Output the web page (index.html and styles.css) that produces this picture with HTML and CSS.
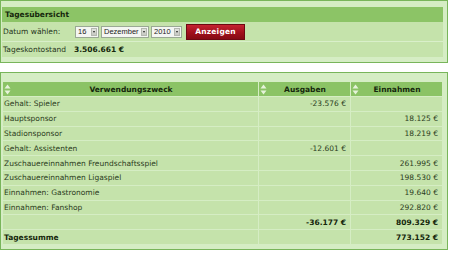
FILE: index.html
```html
<!DOCTYPE html>
<html lang="de">
<head>
<meta charset="utf-8">
<title>Tagesübersicht</title>
<link rel="stylesheet" href="styles.css">
</head>
<body>
<div class="box box-top">
  <div class="panel">
    <div class="phead">Tagesübersicht</div>
    <div class="prow prow-form">
      <span class="lbl">Datum wählen:</span>
      <span class="controls">
        <span class="sel sel-day">16<i class="arr"></i></span>
        <span class="sel sel-month">Dezember<i class="arr"></i></span>
        <span class="sel sel-year">2010<i class="arr"></i></span>
        <button class="btn" type="button">Anzeigen</button>
      </span>
    </div>
    <div class="prow prow-sum">
      <span class="lbl">Tageskontostand</span>
      <b class="val">3.506.661 €</b>
    </div>
  </div>
</div>

<div class="box box-table">
  <table class="tbl">
    <thead>
      <tr>
        <th><div class="th-in"><svg class="sort" viewBox="0 0 7 11" width="7" height="11"><path d="M3.5 0.5 L6.5 4.5 L0.5 4.5 Z M0.5 6.5 L6.5 6.5 L3.5 10.5 Z" fill="#e6f3da"/></svg><span>Verwendungszweck</span><span></span></div></th>
        <th class="num-col"><div class="th-in"><svg class="sort" viewBox="0 0 7 11" width="7" height="11"><path d="M3.5 0.5 L6.5 4.5 L0.5 4.5 Z M0.5 6.5 L6.5 6.5 L3.5 10.5 Z" fill="#e6f3da"/></svg><span>Ausgaben</span><span></span></div></th>
        <th class="num-col"><div class="th-in"><svg class="sort" viewBox="0 0 7 11" width="7" height="11"><path d="M3.5 0.5 L6.5 4.5 L0.5 4.5 Z M0.5 6.5 L6.5 6.5 L3.5 10.5 Z" fill="#e6f3da"/></svg><span>Einnahmen</span><span></span></div></th>
      </tr>
    </thead>
    <tbody>
      <tr><td>Gehalt: Spieler</td><td class="num">-23.576 €</td><td class="num"></td></tr>
      <tr><td>Hauptsponsor</td><td class="num"></td><td class="num">18.125 €</td></tr>
      <tr><td>Stadionsponsor</td><td class="num"></td><td class="num">18.219 €</td></tr>
      <tr><td>Gehalt: Assistenten</td><td class="num">-12.601 €</td><td class="num"></td></tr>
      <tr><td>Zuschauereinnahmen Freundschaftsspiel</td><td class="num"></td><td class="num">261.995 €</td></tr>
      <tr><td>Zuschauereinnahmen Ligaspiel</td><td class="num"></td><td class="num">198.530 €</td></tr>
      <tr><td>Einnahmen: Gastronomie</td><td class="num"></td><td class="num">19.640 €</td></tr>
      <tr><td>Einnahmen: Fanshop</td><td class="num"></td><td class="num">292.820 €</td></tr>
      <tr class="bold"><td></td><td class="num">-36.177 €</td><td class="num">809.329 €</td></tr>
      <tr class="bold"><td>Tagessumme</td><td class="num"></td><td class="num">773.152 €</td></tr>
    </tbody>
  </table>
</div>
</body>
</html>
```

FILE: styles.css
```css
html, body {
  margin: 0;
  padding: 0;
  background: #ffffff;
}

body {
  font-family: "DejaVu Sans", Verdana, sans-serif;
  font-size: 7.5px;
  color: #25361b;
}

.box {
  border: 1px solid #78b55a;
  background: #d5edc4;
  margin-right: 1px;
}

.box-top {
  padding: 6px 4px 5px 1px;
}

.panel {
  display: flex;
  flex-direction: column;
  gap: 1px;
  background: #d9efca;
}

.phead {
  height: 15px;
  line-height: 15px;
  padding-left: 3px;
  background: #8cc466;
  font-weight: bold;
  color: #15270c;
}

.prow {
  display: flex;
  align-items: center;
  background: #c5e3ab;
  padding-left: 1px;
}

.prow-form {
  height: 19px;
  margin-top: -1px;
}

.prow-sum {
  height: 15px;
}

.lbl {
  width: 72px;
  flex: none;
}

.prow-sum .lbl {
  width: 71px;
}

.controls {
  display: flex;
  align-items: center;
  gap: 2px;
}

.sel {
  display: flex;
  align-items: center;
  justify-content: space-between;
  box-sizing: border-box;
  height: 12px;
  padding: 0 1px 0 2px;
  border: 1px solid #9aa894;
  background: #f4f6f2;
  color: #222;
  font-family: "Liberation Sans", Arial, sans-serif;
  font-size: 7.5px;
}

.sel-day { width: 24px; }
.sel-month { width: 48px; }
.sel-year { width: 31px; }

.arr {
  display: block;
  width: 6px;
  height: 8px;
  box-sizing: border-box;
  border: 1px solid #b4b8b0;
  background: #d4d6d0 linear-gradient(#e2e4de, #c6c8c2);
  position: relative;
}

.arr::after {
  content: "";
  position: absolute;
  left: 1px;
  top: 2px;
  border-left: 1px solid transparent;
  border-right: 1px solid transparent;
  border-top: 2px solid #222;
}

.btn {
  margin-left: 2px;
  width: 59px;
  height: 16px;
  padding: 0;
  border: 1px solid #6e0812;
  background: linear-gradient(#c52431, #a0101c 55%, #860a14);
  color: #ffffff;
  font-family: "DejaVu Sans", Verdana, sans-serif;
  font-size: 7.5px;
  font-weight: bold;
  letter-spacing: 0.2px;
}

.val {
  color: #15270c;
}

.box-table {
  margin-top: 9px;
  padding: 8px 4px 4px 1px;
}

.tbl {
  width: 100%;
  border-collapse: separate;
  border-spacing: 1px;
  table-layout: fixed;
}

.tbl th {
  height: 14px;
  padding: 0;
  background: #8bc365;
  color: #15270c;
  font-weight: bold;
}

.tbl th.num-col {
  width: 91px;
}

.th-in {
  display: grid;
  grid-template-columns: 7px 1fr 7px;
  align-items: center;
  padding-left: 1px;
}

.th-in span {
  text-align: center;
}

.sort {
  display: block;
}

.tbl td {
  height: 13.8px;
  padding: 0 0 0 1px;
  background: #c5e3ab;
  white-space: nowrap;
  color: #2a3b20;
}

.tbl td.num {
  text-align: right;
  padding: 0 4px 0 0;
}

.tbl tr.bold td {
  font-weight: bold;
  color: #15270c;
}
```
